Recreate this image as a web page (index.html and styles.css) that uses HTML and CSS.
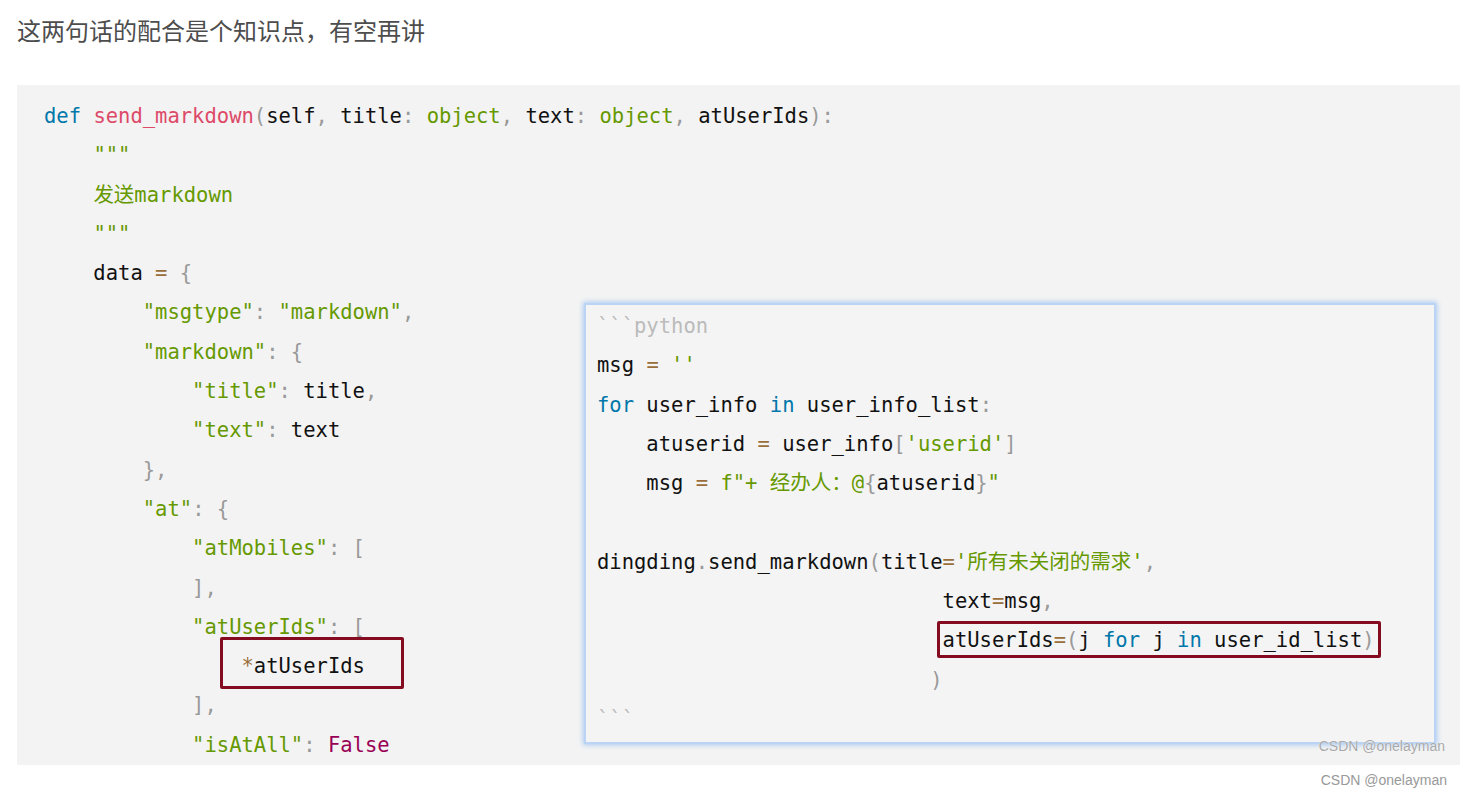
FILE: index.html
```html
<!DOCTYPE html>
<html lang="zh-CN">
<head>
    <meta charset="UTF-8">
    <title>send_markdown</title>
    <link rel="stylesheet" href="styles.css">
</head>
<body>

    <p class="title">这两句话的配合是个知识点，有空再讲</p>

    <div class="codeBox">
<pre class="code main"><span class="kw">def</span> <span class="fn">send_markdown</span><span class="pn">(</span>self<span class="pn">,</span> title<span class="pn">:</span> <span class="st">object</span><span class="pn">,</span> text<span class="pn">:</span> <span class="st">object</span><span class="pn">,</span> atUserIds<span class="pn">):</span>
    <span class="st">"""</span>
    <span class="st">发送markdown</span>
    <span class="st">"""</span>
    data <span class="op">=</span> <span class="pn">{</span>
        <span class="st">"msgtype"</span><span class="pn">:</span> <span class="st">"markdown"</span><span class="pn">,</span>
        <span class="st">"markdown"</span><span class="pn">:</span> <span class="pn">{</span>
            <span class="st">"title"</span><span class="pn">:</span> title<span class="pn">,</span>
            <span class="st">"text"</span><span class="pn">:</span> text
        <span class="pn">},</span>
        <span class="st">"at"</span><span class="pn">:</span> <span class="pn">{</span>
            <span class="st">"atMobiles"</span><span class="pn">:</span> <span class="pn">[</span>
            <span class="pn">],</span>
            <span class="st">"atUserIds"</span><span class="pn">:</span> <span class="pn">[</span>
                <span class="op">*</span>atUserIds
            <span class="pn">],</span>
            <span class="st">"isAtAll"</span><span class="pn">:</span> <span class="bo">False</span></pre>

        <!-- red mark on the left code -->
        <div class="mark markLeft"></div>

        <!-- pasted snippet lying over the code -->
        <div class="snippet">
<pre class="code"><span class="fence">```python</span>
msg <span class="op">=</span> <span class="st">''</span>
<span class="kw">for</span> user_info <span class="kw">in</span> user_info_list<span class="pn">:</span>
    atuserid <span class="op">=</span> user_info<span class="pn">[</span><span class="st">'userid'</span><span class="pn">]</span>
    msg <span class="op">=</span> <span class="st">f"+ 经办人：@</span><span class="pn">{</span>atuserid<span class="pn">}</span><span class="st">"</span>

dingding<span class="pn">.</span>send_markdown<span class="pn">(</span>title<span class="op">=</span><span class="st">'所有未关闭的需求'</span><span class="pn">,</span>
                            text<span class="op">=</span>msg<span class="pn">,</span>
                            atUserIds<span class="op">=</span><span class="pn">(</span>j <span class="kw">for</span> j <span class="kw">in</span> user_id_list<span class="pn">)</span>
                           <span class="pn">)</span>
<span class="fence">```</span></pre>
            <div class="mark markRight"></div>
        </div>

        <div class="wmInner">CSDN @onelayman</div>
    </div>

    <div class="wm">CSDN @onelayman</div>

</body>
</html>
```

FILE: styles.css
```css
body {
    margin: 0;
    padding: 0;
    background: #fff;
}

.title {
    margin: 0;
    padding: 12px 17px 0;
    font-family: "Noto Sans CJK SC", "Noto Sans", sans-serif;
    font-size: 24px;
    line-height: 36px;
    color: #4d4d4d;
}

.codeBox {
    position: relative;
    margin: 37px 3px 0 17px;
    height: 680px;
    overflow: hidden;
    background: #f3f3f3;
}

.code {
    margin: 0;
    padding: 10px 27px;
    font-family: "DejaVu Sans Mono", "Noto Sans CJK SC", monospace;
    font-size: 20.5px;
    line-height: 39.3px;
    color: #111;
    white-space: pre;
}

.main {
    padding-top: 12px;
}

/* token colours */
.kw { color: #0077aa; }
.fn { color: #dd4a68; }
.pn { color: #999; }
.st { color: #669900; }
.op { color: #9a6e3a; }
.bo { color: #990055; }
.fence { color: #bbb; }

.snippet {
    position: absolute;
    left: 567px;
    top: 218px;
    width: 848px;
    height: 437px;
    background: #f4f4f4;
    border: 2px solid #b9d4f5;
    box-shadow: 0 0 5px 1px #a9c9f3;
}

.snippet .code {
    padding: 2px 11px;
}

.mark {
    position: absolute;
    border: 3px solid #850b20;
    border-radius: 2px;
}

.markLeft {
    left: 203px;
    top: 552px;
    width: 178px;
    height: 46px;
}

.markRight {
    left: 351px;
    top: 316px;
    width: 438px;
    height: 31px;
}

.wmInner {
    position: absolute;
    right: 15px;
    top: 653px;
    font-family: "Liberation Sans", Arial, sans-serif;
    font-size: 14px;
    color: #a8a8a8;
    text-shadow: 0 0 1px #fff;
}

.wm {
    padding-right: 16px;
    text-align: right;
    font-family: "Liberation Sans", Arial, sans-serif;
    font-size: 14px;
    line-height: 30px;
    color: #999;
}
```
